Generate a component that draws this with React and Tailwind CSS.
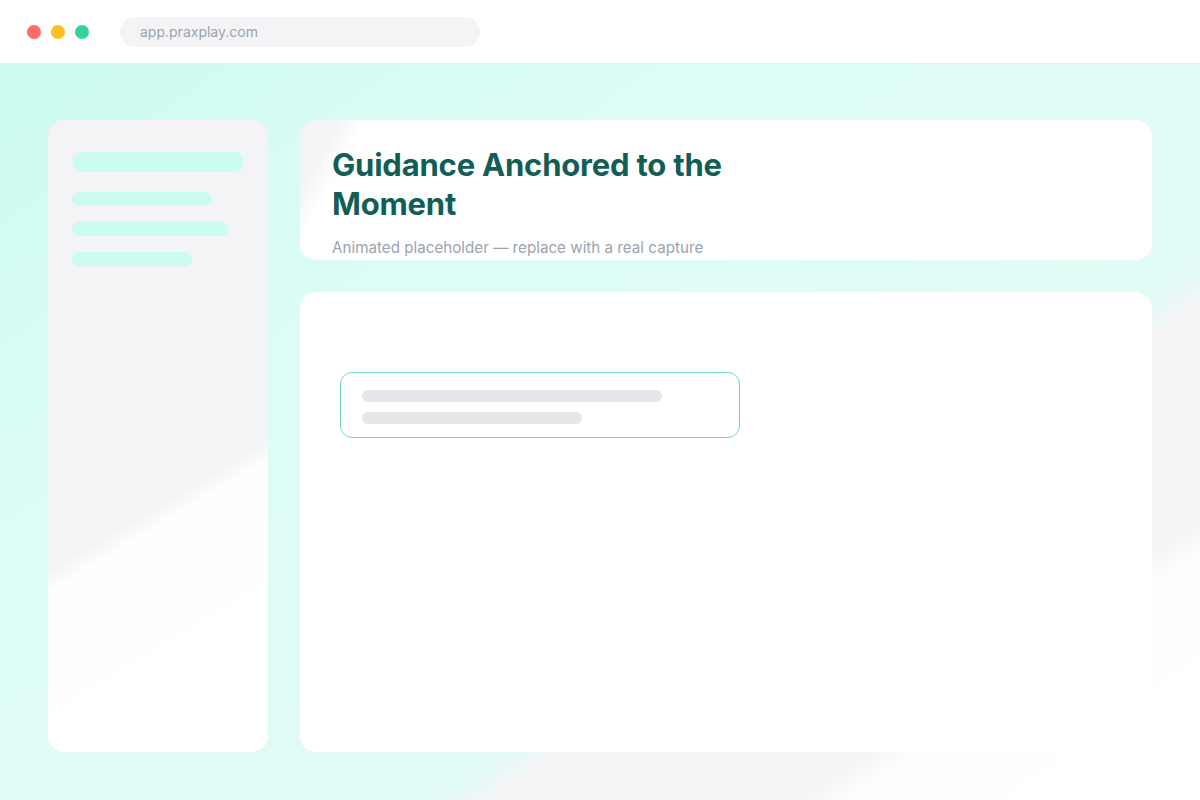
const sideBars = ["w-[140px]", "w-[156px]", "w-[120px]"];

function WindowDots() {
  return (
    <div className="flex items-center gap-[10px]">
      <span className="h-[14px] w-[14px] rounded-full bg-[#ff6b6b]" />
      <span className="h-[14px] w-[14px] rounded-full bg-[#fbbf24]" />
      <span className="h-[14px] w-[14px] rounded-full bg-[#34d399]" />
    </div>
  );
}

function TopBar() {
  return (
    <div className="flex h-16 items-center gap-[31px] border-b border-[#e8eaee] bg-white pl-[27px]">
      <WindowDots />
      <div className="flex h-[30px] w-[360px] items-center rounded-full bg-[#f4f4f6] pl-5 text-[14px] text-[#9ca3af]">
        app.praxplay.com
      </div>
    </div>
  );
}

function Sidebar() {
  return (
    <aside className="flex w-[220px] shrink-0 flex-col rounded-2xl bg-[linear-gradient(149deg,#f4f4f6_0%,#f4f4f6_59%,#fdfefe_62%,#ffffff_100%)] px-6 pt-8">
      <div className="h-5 w-[172px] rounded-full bg-[#ccfbf1]" />
      <div className="mt-5 flex flex-col gap-4">
        {sideBars.map((w, i) => (
          <div key={i} className={`h-[14px] rounded-full bg-[#ccfbf1] ${w}`} />
        ))}
      </div>
    </aside>
  );
}

function Header() {
  return (
    <div className="h-[140px] overflow-hidden rounded-2xl bg-[linear-gradient(118deg,#f4f4f6_0%,#f4f4f6_4%,#ffffff_7%,#ffffff_100%)] px-8 pt-[25px]">
      <h1 className="max-w-[440px] text-[31px] leading-[39px] font-bold tracking-[-0.2px] text-[#115e57]">
        Guidance Anchored to the Moment
      </h1>
      <p className="mt-[15px] text-[15.2px] leading-5 text-[#9ca3af]">
        Animated placeholder — replace with a real capture
      </p>
    </div>
  );
}

function Stage() {
  return (
    <div className="flex-1 rounded-2xl bg-white px-10 pt-20">
      <div className="flex w-[400px] flex-col gap-[10px] rounded-xl border border-[#6fd8c9] px-[21px] pt-[17px] pb-[13px]">
        <div className="h-3 w-[300px] rounded-full bg-[#e5e6ea]" />
        <div className="h-3 w-[220px] rounded-full bg-[#e5e6ea]" />
      </div>
    </div>
  );
}

export default function App() {
  return (
    <div className="flex h-[800px] w-[1200px] flex-col font-['Inter','Liberation_Sans',sans-serif]">
      <TopBar />
      <main className="flex flex-1 gap-8 bg-[linear-gradient(145deg,#ccfbf1_0%,#dcfcf5_30%,#e2fbf6_66%,#f4f4f6_68.5%,#f4f4f6_82%,#fdfefe_84.5%,#ffffff_100%)] px-12 pt-14 pb-12">
        <Sidebar />
        <div className="flex flex-1 flex-col gap-8">
          <Header />
          <Stage />
        </div>
      </main>
    </div>
  );
}
